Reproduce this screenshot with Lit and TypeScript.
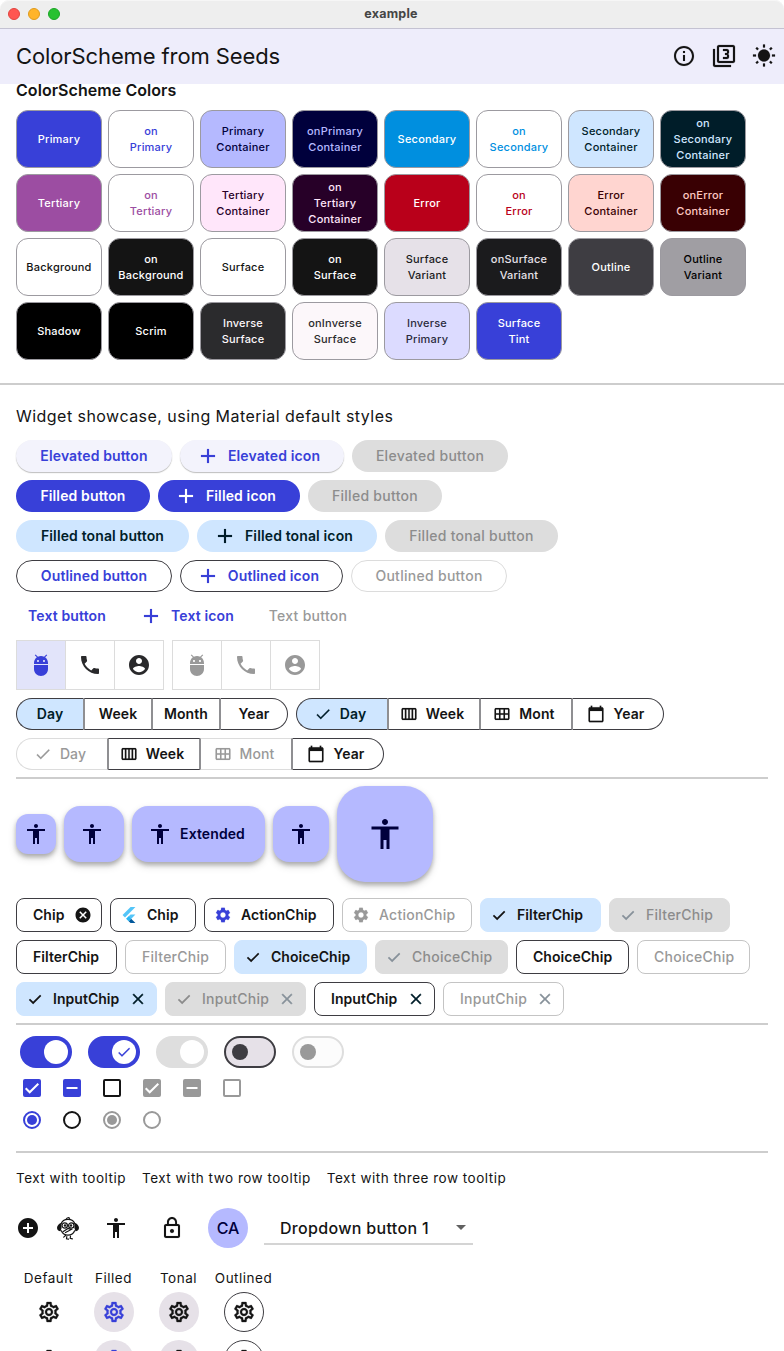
import { LitElement, html, css, svg, nothing } from "lit";
import { customElement, property } from "lit/decorators.js";
import { classMap } from "lit/directives/class-map.js";
import { styleMap } from "lit/directives/style-map.js";

const ICONS: Record<string, string> = {
  info: "M11 7h2v2h-2zm0 4h2v6h-2zm1-9C6.48 2 2 6.48 2 12s4.48 10 10 10 10-4.48 10-10S17.52 2 12 2zm0 18c-4.41 0-8-3.59-8-8s3.59-8 8-8 8 3.59 8 8-3.59 8-8 8z",
  filter3: "M21 1H7c-1.1 0-2 .9-2 2v14c0 1.1.9 2 2 2h14c1.1 0 2-.9 2-2V3c0-1.1-.9-2-2-2zm0 16H7V3h14v14zM3 5H1v16c0 1.1.9 2 2 2h16v-2H3V5zm14 8v-1.5c0-.83-.67-1.5-1.5-1.5.83 0 1.5-.67 1.5-1.5V7c0-1.11-.9-2-2-2h-4v2h4v2h-2v2h2v2h-4v2h4c1.1 0 2-.89 2-2z",
  sunny: "M6.76 4.84l-1.8-1.79-1.41 1.41 1.79 1.79 1.42-1.41zM4 10.5H1v2h3v-2zm9-9.95h-2V3.5h2V.55zm7.45 3.91l-1.41-1.41-1.79 1.79 1.41 1.41 1.79-1.79zm-3.21 13.7l1.79 1.8 1.41-1.41-1.8-1.79-1.4 1.4zM20 10.5v2h3v-2h-3zm-8-5c-3.31 0-6 2.69-6 6s2.69 6 6 6 6-2.69 6-6-2.69-6-6-6zm-1 16.95h2V19.5h-2v2.95zm-7.45-3.91l1.41 1.41 1.79-1.8-1.41-1.41-1.79 1.8z",
  add: "M19 13h-6v6h-2v-6H5v-2h6V5h2v6h6v2z",
  adb: "M5 16c0 3.87 3.13 7 7 7s7-3.13 7-7v-4H5v4zM16.12 4.37l2.1-2.1-.82-.83-2.3 2.31C14.16 3.28 13.12 3 12 3s-2.16.28-3.09.75L6.6 1.44l-.82.83 2.1 2.1C6.14 5.64 5 7.68 5 10v1h14v-1c0-2.32-1.14-4.36-2.88-5.63zM9 9c-.55 0-1-.45-1-1s.45-1 1-1 1 .45 1 1-.45 1-1 1zm6 0c-.55 0-1-.45-1-1s.45-1 1-1 1 .45 1 1-.45 1-1 1z",
  phone: "M6.62 10.79c1.44 2.83 3.76 5.14 6.59 6.59l2.2-2.2c.27-.27.67-.36 1.02-.24 1.12.37 2.33.57 3.57.57.55 0 1 .45 1 1V20c0 .55-.45 1-1 1-9.39 0-17-7.61-17-17 0-.55.45-1 1-1h3.5c.55 0 1 .45 1 1 0 1.25.2 2.45.57 3.57.11.35.03.74-.25 1.02l-2.2 2.2z",
  account: "M12 2C6.48 2 2 6.48 2 12s4.48 10 10 10 10-4.48 10-10S17.52 2 12 2zm0 3c1.66 0 3 1.34 3 3s-1.34 3-3 3-3-1.34-3-3 1.34-3 3-3zm0 14.2c-2.5 0-4.71-1.28-6-3.22.03-1.99 4-3.08 6-3.08 1.99 0 5.97 1.09 6 3.08-1.29 1.94-3.5 3.22-6 3.22z",
  check: "M9 16.17L4.83 12l-1.42 1.41L9 19 21 7l-1.41-1.41z",
  week: "M20 4H4c-1.1 0-2 .9-2 2v12c0 1.1.9 2 2 2h16c1.1 0 2-.9 2-2V6c0-1.1-.9-2-2-2zM13 6h2.5v12H13V6zm-2 12H8.5V6H11v12zM4 6h2.5v12H4V6zm16 12h-2.5V6H20v12z",
  month: "M20 4H4c-1.1 0-2 .9-2 2v12c0 1.1.9 2 2 2h16c1.1 0 2-.9 2-2V6c0-1.1-.9-2-2-2zM8 11H4V6h4v5zm6 0h-4V6h4v5zm6 0h-4V6h4v5zM8 18H4v-5h4v5zm6 0h-4v-5h4v5zm6 0h-4v-5h4v5z",
  today: "M20 3h-1V1h-2v2H7V1H5v2H4c-1.1 0-2 .9-2 2v16c0 1.1.9 2 2 2h16c1.1 0 2-.9 2-2V5c0-1.1-.9-2-2-2zm0 18H4V8h16v13z",
  accessibility: "M12 2c1.1 0 2 .9 2 2s-.9 2-2 2-2-.9-2-2 .9-2 2-2zm9 7h-6v13h-2v-6h-2v6H9V9H3V7h18v2z",
  cancel: "M12 2C6.47 2 2 6.47 2 12s4.47 10 10 10 10-4.47 10-10S17.53 2 12 2zm5 13.59L15.59 17 12 13.41 8.41 17 7 15.59 10.59 12 7 8.41 8.41 7 12 10.59 15.59 7 17 8.41 13.41 12 17 15.59z",
  clear: "M19 6.41L17.59 5 12 10.59 6.41 5 5 6.41 10.59 12 5 17.59 6.41 19 12 13.41 17.59 19 19 17.59 13.41 12z",
  settings: "M19.14 12.94c.04-.3.06-.61.06-.94 0-.32-.02-.64-.07-.94l2.03-1.58c.18-.14.23-.41.12-.61l-1.92-3.32c-.12-.22-.37-.29-.59-.22l-2.39.96c-.5-.38-1.03-.7-1.62-.94l-.36-2.54c-.04-.24-.24-.41-.48-.41h-3.84c-.24 0-.43.17-.47.41l-.36 2.54c-.59.24-1.13.57-1.62.94l-2.39-.96c-.22-.08-.47 0-.59.22L2.74 8.87c-.12.21-.08.47.12.61l2.03 1.58c-.05.3-.09.63-.09.94s.02.64.07.94l-2.03 1.58c-.18.14-.23.41-.12.61l1.92 3.32c.12.22.37.29.59.22l2.39-.96c.5.38 1.03.7 1.62.94l.36 2.54c.05.24.24.41.48.41h3.84c.24 0 .44-.17.47-.41l.36-2.54c.59-.24 1.13-.56 1.62-.94l2.39.96c.22.08.47 0 .59-.22l1.92-3.32c.12-.22.07-.47-.12-.61l-2.01-1.58zM12 15.6c-1.98 0-3.6-1.62-3.6-3.6s1.62-3.6 3.6-3.6 3.6 1.62 3.6 3.6-1.62 3.6-3.6 3.6z",
  settingsOutlined: "M19.43 12.98c.04-.32.07-.64.07-.98 0-.34-.03-.66-.07-.98l2.11-1.65c.19-.15.24-.42.12-.64l-2-3.46c-.09-.16-.26-.25-.44-.25-.06 0-.12.01-.17.03l-2.49 1c-.52-.4-1.08-.73-1.69-.98l-.38-2.65C14.46 2.18 14.25 2 14 2h-4c-.25 0-.46.18-.49.42l-.38 2.65c-.61.25-1.17.59-1.69.98l-2.49-1c-.06-.02-.12-.03-.18-.03-.17 0-.34.09-.43.25l-2 3.46c-.13.22-.07.49.12.64l2.11 1.65c-.04.32-.07.65-.07.98 0 .33.03.66.07.98l-2.11 1.65c-.19.15-.24.42-.12.64l2 3.46c.09.16.26.25.44.25.06 0 .12-.01.17-.03l2.49-1c.52.4 1.08.73 1.69.98l.38 2.65c.03.24.24.42.49.42h4c.25 0 .46-.18.49-.42l.38-2.65c.61-.25 1.17-.59 1.69-.98l2.49 1c.06.02.12.03.18.03.17 0 .34-.09.43-.25l2-3.46c.12-.22.07-.49-.12-.64l-2.11-1.65zm-1.98-1.71c.04.31.05.52.05.73 0 .21-.02.43-.05.73l-.14 1.13.89.7 1.08.84-.7 1.21-1.27-.51-1.04-.42-.9.68c-.43.32-.84.56-1.25.73l-1.06.43-.16 1.13-.2 1.35h-1.4l-.19-1.35-.16-1.13-1.06-.43c-.43-.18-.83-.41-1.23-.71l-.91-.7-1.06.43-1.27.51-.7-1.21 1.08-.84.89-.7-.14-1.13c-.03-.31-.05-.54-.05-.74s.02-.43.05-.73l.14-1.13-.89-.7-1.08-.84.7-1.21 1.27.51 1.04.42.9-.68c.43-.32.84-.56 1.25-.73l1.06-.43.16-1.13.2-1.35h1.39l.19 1.35.16 1.13 1.06.43c.43.18.83.41 1.23.71l.91.7 1.06-.43 1.27-.51.7 1.21-1.07.85-.89.7.14 1.13zM12 8c-2.21 0-4 1.79-4 4s1.79 4 4 4 4-1.79 4-4-1.79-4-4-4zm0 6c-1.1 0-2-.9-2-2s.9-2 2-2 2 .9 2 2-.9 2-2 2z",
  lock: "M12 17c1.1 0 2-.9 2-2s-.9-2-2-2-2 .9-2 2 .9 2 2 2zm6-9h-1V6c0-2.76-2.24-5-5-5S7 3.24 7 6v2H6c-1.1 0-2 .9-2 2v10c0 1.1.9 2 2 2h12c1.1 0 2-.9 2-2V10c0-1.1-.9-2-2-2zM8.9 6c0-1.71 1.39-3.1 3.1-3.1s3.1 1.39 3.1 3.1v2H8.9V6zM18 20H6V10h12v10z",
  addCircle: "M12 2C6.48 2 2 6.48 2 12s4.48 10 10 10 10-4.48 10-10S17.52 2 12 2zm5 11h-4v4h-2v-4H7v-2h4V7h2v4h4v2z",
  dropDown: "M7 10l5 5 5-5z",
};

// Extra outline, in viewBox units, for the glyphs that are drawn a touch heavier.
const EMPHASIS: Record<string, number> = {
  filter3: 0.2, info: 0.1, sunny: 0.2, add: 0.15, check: 0.2, week: 0.2, month: 0.15,
  today: 0.2, clear: 0.5, settingsOutlined: 0.3, lock: 0.1, settings: 0.2,
};

@customElement("md-icon")
class MdIcon extends LitElement {
  @property() name = "";
  @property({ type: Number }) size = 24;

  static styles = css`
    :host { display: inline-flex; flex: none; }
    svg { display: block; fill: currentColor; overflow: visible; }
  `;

  render() {
    const weight = EMPHASIS[this.name] ?? 0;
    let body = svg`<path d=${ICONS[this.name] ?? ""} stroke="currentColor" stroke-width=${weight}></path>`;
    if (this.name === "tick") {
      body = svg`<path fill="none" stroke="currentColor" stroke-width="2.3" d="M4.600 12.600L9.500 17.300L19.600 7.200"></path>`;
    } else if (this.name === "flutter") {
      body = svg`
        <path fill="#54c5f8" d="M14.3 0L2.3 12 6 15.7 21.7 0z"></path>
        <path fill="#54c5f8" d="M14.3 11.1L7.9 17.5l3.7 3.7 10.1-10.1z"></path>
        <path fill="#01579b" d="M11.6 21.2l2.7 2.8h7.4l-6.5-6.5z"></path>
        <path fill="#29b6f6" d="M7.9 17.5l3.7-3.7 3.6 3.7-3.6 3.7z"></path>`;
    } else if (this.name === "dash") {
      body = svg`
        <g fill="none" stroke="currentColor" stroke-width="1.2" stroke-linecap="round">
          <path d="M5 8C6 4.800 9 3.300 12 3.300s6 1.500 7 4.700"></path>
          <path d="M10.300 3c.8-1.400 2.500-1.700 3.300-.7"></path>
          <path d="M5.400 14.800c1 2.700 3.600 4.300 6.600 4.300s5.600-1.600 6.600-4.300"></path>
          <circle cx="8.700" cy="9.500" r="2.700"></circle>
          <circle cx="15.300" cy="9.500" r="2.700"></circle>
          <path d="M7.300 15.500L12 12.500l3.300 1-5.800 3M9.500 19.500l-1.800 1.600M10.800 20.500l-.3 2.300 2 .3M14.500 20l-.3 2.300 2.200.5"></path>
        </g>
        <circle cx="9" cy="9.500" r="1.200"></circle>
        <circle cx="15" cy="9.500" r="1.200"></circle>
        <path d="M5.200 7C3.200 7.400 1 9.700 1 11.700c0 2.200 1.600 3.700 3.600 3.600L5.600 12zM18.800 7c2 .4 4.200 2.700 4.200 4.700 0 2.200-1.600 3.700-3.600 3.600L18.400 12z"></path>`;
    }
    return html`<svg width=${this.size} height=${this.size} viewBox="0 0 24 24">${body}</svg>`;
  }
}

type Swatch = [label: string, bg: string, fg: string];
const SWATCHES: Swatch[] = [
  ["Primary", "#3840d8", "#ffffff"],
  ["on\nPrimary", "#ffffff", "#3840d8"],
  ["Primary\nContainer", "#b5b9ff", "#00003c"],
  ["onPrimary\nContainer", "#00003c", "#b5b9ff"],
  ["Secondary", "#008fdf", "#ffffff"],
  ["on\nSecondary", "#ffffff", "#008fdf"],
  ["Secondary\nContainer", "#cfe6ff", "#001d29"],
  ["on\nSecondary\nContainer", "#001d29", "#cfe6ff"],
  ["Tertiary", "#9c4da2", "#ffffff"],
  ["on\nTertiary", "#ffffff", "#9c4da2"],
  ["Tertiary\nContainer", "#ffe6fa", "#270028"],
  ["on\nTertiary\nContainer", "#270028", "#ffe6fa"],
  ["Error", "#b9001a", "#ffffff"],
  ["on\nError", "#ffffff", "#b9001a"],
  ["Error\nContainer", "#ffd5d0", "#390003"],
  ["onError\nContainer", "#390003", "#ffc8c2"],
  ["Background", "#ffffff", "#141414"],
  ["on\nBackground", "#141414", "#ffffff"],
  ["Surface", "#ffffff", "#141414"],
  ["on\nSurface", "#141414", "#ffffff"],
  ["Surface\nVariant", "#e6e1e8", "#1b1b1d"],
  ["onSurface\nVariant", "#1b1b1d", "#e6e1e8"],
  ["Outline", "#3e3d42", "#ffffff"],
  ["Outline\nVariant", "#a09ea3", "#000000"],
  ["Shadow", "#000000", "#ffffff"],
  ["Scrim", "#000000", "#ffffff"],
  ["Inverse\nSurface", "#2b2b2d", "#fcf7fa"],
  ["onInverse\nSurface", "#fcf7fa", "#2b2b2d"],
  ["Inverse\nPrimary", "#dcdbff", "#2b2b3d"],
  ["Surface\nTint", "#3840d8", "#ffffff"],
];

interface Btn { label: string; kind: string; w: number; icon?: boolean; off?: boolean }
const BUTTONS: Btn[][] = [
  [
    { label: "Elevated button", kind: "elevated", w: 156 },
    { label: "Elevated icon", kind: "elevated", w: 164, icon: true },
    { label: "Elevated button", kind: "elevated", w: 156, off: true },
  ],
  [
    { label: "Filled button", kind: "filled", w: 134 },
    { label: "Filled icon", kind: "filled", w: 142, icon: true },
    { label: "Filled button", kind: "filled", w: 134, off: true },
  ],
  [
    { label: "Filled tonal button", kind: "tonal", w: 173 },
    { label: "Filled tonal icon", kind: "tonal", w: 180, icon: true },
    { label: "Filled tonal button", kind: "tonal", w: 173, off: true },
  ],
  [
    { label: "Outlined button", kind: "outlined", w: 156 },
    { label: "Outlined icon", kind: "outlined", w: 163, icon: true },
    { label: "Outlined button", kind: "outlined", w: 156, off: true },
  ],
  [
    { label: "Text button", kind: "text", w: 102 },
    { label: "Text icon", kind: "text", w: 123, icon: true },
    { label: "Text button", kind: "text", w: 102, off: true },
  ],
];

interface Seg { label: string; icon?: string; selected?: boolean; off?: boolean }
const SEG_TEXT: Seg[] = [{ label: "Day", selected: true }, { label: "Week" }, { label: "Month" }, { label: "Year" }];
const SEG_ICON: Seg[] = [
  { label: "Day", icon: "check", selected: true },
  { label: "Week", icon: "week" },
  { label: "Mont", icon: "month" },
  { label: "Year", icon: "today" },
];
const SEG_MIXED: Seg[] = [
  { label: "Day", icon: "check", off: true },
  { label: "Week", icon: "week" },
  { label: "Mont", icon: "month", off: true },
  { label: "Year", icon: "today" },
];

interface ChipData { label: string; w: number; lead?: string; trail?: string; fill?: boolean; off?: boolean }
const CHIPS: ChipData[][] = [
  [
    { label: "Chip", w: 86, trail: "cancel" },
    { label: "Chip", w: 86, lead: "flutter" },
    { label: "ActionChip", w: 130, lead: "settings" },
    { label: "ActionChip", w: 130, lead: "settings", off: true },
    { label: "FilterChip", w: 121, lead: "tick", fill: true },
    { label: "FilterChip", w: 121, lead: "tick", fill: true, off: true },
  ],
  [
    { label: "FilterChip", w: 101 },
    { label: "FilterChip", w: 101, off: true },
    { label: "ChoiceChip", w: 133, lead: "tick", fill: true },
    { label: "ChoiceChip", w: 133, lead: "tick", fill: true, off: true },
    { label: "ChoiceChip", w: 113 },
    { label: "ChoiceChip", w: 113, off: true },
  ],
  [
    { label: "InputChip", w: 141, lead: "tick", trail: "clear", fill: true },
    { label: "InputChip", w: 141, lead: "tick", trail: "clear", fill: true, off: true },
    { label: "InputChip", w: 121, trail: "clear" },
    { label: "InputChip", w: 121, trail: "clear", off: true },
  ],
];

@customElement("app-root")
class AppRoot extends LitElement {
  static styles = css`
    :host {
      display: block;
      height: 1351px;
      overflow: hidden;
      background: #fff;
      color: #141414;
      font-family: Inter, "Liberation Sans", sans-serif;
      font-size: 14px;
      --primary: #3840d8;
      --tonal: #cfe6ff;
      --on-tonal: #001d29;
      --outline: #3e3d42;
      --disabled: #999;
      --disabled-bg: #ddd;
    }
    * { box-sizing: border-box; }
    .row { display: flex; gap: 8px; }

    .titlebar {
      display: grid;
      grid-template-columns: 100px 1fr 100px;
      align-items: center;
      height: 29px;
      padding-left: 8px;
      padding-right: 10px;
      background: #eee;
      border-bottom: 1px solid #c4c2d2;
      border-radius: 9px 9px 0 0;
      box-shadow: inset 0 1px #f6f6f6;
    }
    .lights { display: flex; gap: 8px; }
    .light { width: 12px; height: 12px; border-radius: 50%; border: 1px solid #e2443f; background: #ff5550; }
    .light.min { background: #ffb429; border-color: #e09b1c; }
    .light.max { background: #28c131; border-color: #1ba726; }
    .wintitle { text-align: center; font-weight: 700; font-size: 12.500px; color: #454545; letter-spacing: 0.250px; padding-bottom: 1px; }

    .appbar {
      display: flex;
      align-items: center;
      justify-content: space-between;
      height: 55px;
      padding: 0 8px 0 16px;
      background: #eeedfb;
    }
    .apptitle { font-size: 22px; letter-spacing: -0.110px; padding-bottom: 2px; }
    .actions { display: flex; gap: 16px; padding-bottom: 1px; }

    .content { padding: 0 16px; }
    .colors-title { height: 26px; line-height: 12px; font-size: 16px; font-weight: 600; letter-spacing: 0.060px; }
    .swatches { display: grid; grid-template-columns: repeat(8, 86px); grid-auto-rows: 58px; gap: 6px; }
    .swatch {
      display: flex; align-items: center; justify-content: center;
      border: 1px solid #9c9aa0;
      border-radius: 12px;
      font-size: 11px; line-height: 16px; font-weight: 500; letter-spacing: 0.200px;
      text-align: center; white-space: pre;
    }
    .divider { height: 2px; background: #cdcdcd; }
    .divider.full { margin-top: 23px; }
    .divider.gap { margin-top: 7px; }
    .showcase-title { height: 55px; padding-top: 21px; line-height: 20px; font-size: 16px; letter-spacing: 0.460px; }

    .stack { display: flex; flex-direction: column; gap: 8px; }
    .btn span, .seg span, .fab span, .chip span { padding-bottom: 2px; }
    .btn {
      display: flex; align-items: center; justify-content: center; gap: 8px;
      height: 32px; border-radius: 16px;
      font-weight: 600; letter-spacing: 0.130px; color: var(--primary); white-space: nowrap;
    }
    .btn.icon { padding-right: 8px; }
    .btn.text.icon { padding-right: 2px; }
    .btn.elevated { background: #f3f3fc; box-shadow: 0 1px 1px rgba(0,0,0,.22), 0 1px 2px rgba(0,0,0,.05); }
    .btn.filled { background: var(--primary); color: #fff; }
    .btn.tonal { background: var(--tonal); color: var(--on-tonal); }
    .btn.outlined { border: 1px solid var(--outline); }
    .btn.off { color: #8c8c8c; background: var(--disabled-bg); box-shadow: none; font-weight: 500; letter-spacing: 0.280px; }
    .btn.outlined.off, .btn.text.off { background: none; color: var(--disabled); border-color: #dcdcdc; }

    .toggles { display: flex; height: 50px; border: 1px solid #dcdcdc; color: #29292b; }
    .toggle { display: flex; align-items: center; justify-content: center; width: 49px; border-left: 1px solid #dcdcdc; }
    .toggle:first-child { border-left: 0; width: 48px; }
    .toggle.on { background: #e2e4fa; color: var(--primary); }
    .toggles.off { color: #999; }

    .segs { display: flex; }
    .seg {
      display: flex; align-items: center; justify-content: center; gap: 8px;
      width: 68px; height: 32px;
      border: 1px solid var(--outline);
      border-left-width: 0;
      font-weight: 600; letter-spacing: 0.100px;
    }
    .icons .seg { width: 92px; padding-right: 4px; }
    .seg + .seg { border-left: 1px solid #8f8f92; }
    .seg:not(:last-child) { border-right-color: #8f8f92; }
    .seg:first-child { border-left-width: 1px; border-radius: 16px 0 0 16px; }
    .seg:last-child { border-radius: 0 16px 16px 0; }
    .seg.selected { background: var(--tonal); color: var(--on-tonal); }
    .seg.off { color: var(--disabled); border-top-color: #dcdcdc; border-bottom-color: #dcdcdc; font-weight: 500; }
    .seg.off:first-child { border-left-color: #dcdcdc; }

    .fabs { display: flex; align-items: center; gap: 8px; height: 96px; margin-top: 7px; }
    .fab {
      display: flex; align-items: center; justify-content: center; gap: 8px;
      width: 56px; height: 56px; border-radius: 16px;
      background: #b5b9ff; color: #00003c; font-weight: 600; letter-spacing: 0.100px;
      box-shadow: 0 3px 4px rgba(0,0,0,.24), 0 4px 8px rgba(0,0,0,.14);
    }
    .fab.small { width: 40px; height: 40px; border-radius: 12px; }
    .fab.wide { width: 60px; padding-right: 4px; }
    .fab.extended { width: 133px; padding-right: 4px; }
    .fab.large { width: 96px; height: 96px; border-radius: 28px; }

    .chips { margin: 16px 0 7px; }
    .chip {
      display: flex; align-items: center;
      height: 34px; padding: 0 16px; border-radius: 8px;
      border: 1px solid var(--outline);
      font-weight: 600; letter-spacing: 0.040px; white-space: nowrap;
    }
    .chip.lead { padding-left: 9px; }
    .chip.trail { padding-right: 9px; }
    .chip .leading { margin-right: 9px; }
    .chip .leading.logo { margin: 0 10px 0 1px; }
    .chip .trailing { margin-left: auto; }
    .chip .gear { color: var(--primary); }
    .chip.fill { background: var(--tonal); border-color: var(--tonal); }
    .chip.off { color: var(--disabled); border-color: #c4c4c4; font-weight: 500; letter-spacing: 0.250px; }
    .chip.off .gear { color: #999; }
    .chip.fill.off { background: var(--disabled-bg); border-color: var(--disabled-bg); color: #8c8c8c; }
    .chip .trailing.x { color: var(--on-tonal); }
    .chip.off .trailing.x, .chip.off .leading.tick { color: #87919a; }

    .switches { display: flex; gap: 16px; padding: 11px 4px 0; }
    .switch {
      display: flex; align-items: center; justify-content: flex-end;
      width: 52px; height: 32px; padding: 4px; border-radius: 16px; background: var(--primary);
    }
    .thumb { display: flex; align-items: center; justify-content: center; width: 24px; height: 24px; border-radius: 50%; background: #fff; color: var(--primary); }
    .switch.dis { background: #dedede; }
    .switch.unsel { justify-content: flex-start; background: #e6e1e8; border: 2px solid var(--outline); padding-left: 6px; }
    .unsel .thumb { width: 16px; height: 16px; background: var(--outline); }
    .switch.unsel.dis { background: #fcfcfc; border-color: #dedede; }
    .unsel.dis .thumb { background: #999; }

    .checks { display: flex; gap: 22px; padding: 11px 7px 0; }
    .box { display: flex; align-items: center; justify-content: center; width: 18px; height: 18px; border-radius: 2px; background: var(--primary); color: #fff; }
    .box svg { display: block; fill: none; stroke: currentColor; stroke-width: 2; }
    .box.grey { background: #999; }
    .box.empty { background: none; border: 2px solid #141414; }
    .box.empty.grey { border-color: #999; }
    .radios { padding: 14px 7px 22px; }
    .radio { display: flex; align-items: center; justify-content: center; width: 18px; height: 18px; border-radius: 50%; border: 2px solid currentColor; }
    .radio.on { color: var(--primary); }
    .radio.grey { color: #999; }
    .dot { width: 10px; height: 10px; border-radius: 50%; background: currentColor; }

    .tips { display: flex; gap: 16px; padding-top: 16px; line-height: 18px; font-size: 13.500px; letter-spacing: 0.500px; white-space: nowrap; }
    .tools { display: flex; align-items: center; height: 40px; margin-top: 21px; }
    .tools .dash { margin-left: 16px; }
    .tools .access { margin-left: 24px; }
    .tools .locked { margin-left: 32px; }
    .avatar { display: flex; align-items: center; justify-content: center; width: 40px; height: 40px; margin-left: 24px; border-radius: 50%; background: #b5b9ff; color: #00003c; font-size: 16px; font-weight: 500; }
    .dropdown {
      display: flex; align-items: center; justify-content: space-between;
      width: 209px; height: 34px; margin-left: 16px; padding-left: 16px;
      border-bottom: 2px solid #d4d4d4; font-size: 16px; font-weight: 500; letter-spacing: 0.320px;
    }
    .dropdown span { padding-top: 1px; }
    .dropdown md-icon { color: #616161; }
    .variants {
      display: grid; grid-template-columns: repeat(4, 65px); grid-template-rows: 16px 40px 40px; row-gap: 8px;
      justify-items: center; margin-top: 20px; font-size: 13.500px; letter-spacing: 0.500px;
    }
    .cap { line-height: 20px; }
    .ib { display: flex; align-items: center; justify-content: center; width: 40px; height: 40px; border-radius: 50%; }
    .ib.fill { background: #e6e1e8; }
    .ib.blue { color: var(--primary); }
    .ib.line { border: 1px solid var(--outline); }
  `;

  private swatch([label, bg, fg]: Swatch) {
    return html`<div class="swatch" style=${styleMap({ background: bg, color: fg })}>${label}</div>`;
  }

  private button(b: Btn) {
    const cls = { btn: true, [b.kind]: true, icon: !!b.icon, off: !!b.off };
    return html`<div class=${classMap(cls)} style=${styleMap({ width: `${b.w}px` })}>
      ${b.icon ? html`<md-icon name="add"></md-icon>` : nothing}<span>${b.label}</span>
    </div>`;
  }

  private segmented(items: Seg[]) {
    return html`<div class=${classMap({ segs: true, icons: !!items[0].icon })}>
      ${items.map((s) => html`<div class=${classMap({ seg: true, selected: !!s.selected, off: !!s.off })}>
        ${s.icon ? html`<md-icon name=${s.icon} .size=${18}></md-icon>` : nothing}<span>${s.label}</span>
      </div>`)}
    </div>`;
  }

  private chip(c: ChipData) {
    const cls = { chip: true, lead: !!c.lead, trail: !!c.trail, fill: !!c.fill, off: !!c.off };
    const leadCls = {
      leading: true,
      gear: c.lead === "settings",
      logo: c.lead === "flutter",
      tick: c.lead === "tick" && !c.trail,
    };
    return html`<div class=${classMap(cls)} style=${styleMap({ width: `${c.w}px` })}>
      ${c.lead ? html`<md-icon class=${classMap(leadCls)} name=${c.lead} .size=${c.lead === "flutter" ? 16 : 18}></md-icon>` : nothing}
      <span>${c.label}</span>
      ${c.trail ? html`<md-icon class=${classMap({ trailing: true, x: c.trail === "clear" })} name=${c.trail} .size=${18}></md-icon>` : nothing}
    </div>`;
  }

  private toggles(off: boolean) {
    return html`<div class=${classMap({ toggles: true, off })}>
      ${["adb", "phone", "account"].map((n, i) => html`<div class=${classMap({ toggle: true, on: !off && i === 0 })}><md-icon name=${n}></md-icon></div>`)}
    </div>`;
  }

  private box(kind: "check" | "dash" | "empty", grey = false) {
    return html`<div class=${classMap({ box: true, grey, empty: kind === "empty" })}>
      ${kind === "check" ? html`<svg width="18" height="18" viewBox="0 0 18 18"><path d="M2.700 9.300L6.700 13.300L15.300 4.700"></path></svg>` : nothing}
      ${kind === "dash" ? html`<svg width="18" height="18" viewBox="0 0 18 18"><path d="M3.500 9h11"></path></svg>` : nothing}
    </div>`;
  }

  private iconRow() {
    return html`
      <div class="ib"><md-icon name="settingsOutlined"></md-icon></div>
      <div class="ib fill blue"><md-icon name="settingsOutlined"></md-icon></div>
      <div class="ib fill"><md-icon name="settingsOutlined"></md-icon></div>
      <div class="ib line"><md-icon name="settingsOutlined"></md-icon></div>`;
  }

  render() {
    const person = (size = 24) => html`<md-icon name="accessibility" .size=${size}></md-icon>`;
    return html`
      <div class="titlebar">
        <div class="lights"><div class="light"></div><div class="light min"></div><div class="light max"></div></div>
        <div class="wintitle">example</div>
      </div>
      <div class="appbar">
        <div class="apptitle">ColorScheme from Seeds</div>
        <div class="actions"><md-icon name="info"></md-icon><md-icon name="filter3"></md-icon><md-icon name="sunny"></md-icon></div>
      </div>
      <div class="content">
        <div class="colors-title">ColorScheme Colors</div>
        <div class="swatches">${SWATCHES.map((s) => this.swatch(s))}</div>
      </div>
      <div class="divider full"></div>
      <div class="content">
        <div class="showcase-title">Widget showcase, using Material default styles</div>
        <div class="stack">
          ${BUTTONS.map((r) => html`<div class="row">${r.map((b) => this.button(b))}</div>`)}
          <div class="row">${this.toggles(false)}${this.toggles(true)}</div>
          <div class="row">${this.segmented(SEG_TEXT)}${this.segmented(SEG_ICON)}</div>
          <div class="row">${this.segmented(SEG_MIXED)}</div>
        </div>
        <div class="divider gap"></div>
        <div class="fabs">
          <div class="fab small">${person()}</div>
          <div class="fab wide">${person()}</div>
          <div class="fab extended">${person()}<span>Extended</span></div>
          <div class="fab">${person()}</div>
          <div class="fab large">${person(36)}</div>
        </div>
        <div class="stack chips">${CHIPS.map((r) => html`<div class="row">${r.map((c) => this.chip(c))}</div>`)}</div>
        <div class="divider"></div>
        <div class="switches">
          <div class="switch"><div class="thumb"></div></div>
          <div class="switch"><div class="thumb"><md-icon name="check" .size=${16}></md-icon></div></div>
          <div class="switch dis"><div class="thumb"></div></div>
          <div class="switch unsel"><div class="thumb"></div></div>
          <div class="switch unsel dis"><div class="thumb"></div></div>
        </div>
        <div class="checks">
          ${this.box("check")}${this.box("dash")}${this.box("empty")}
          ${this.box("check", true)}${this.box("dash", true)}${this.box("empty", true)}
        </div>
        <div class="checks radios">
          <div class="radio on"><div class="dot"></div></div>
          <div class="radio"></div>
          <div class="radio grey"><div class="dot"></div></div>
          <div class="radio grey"></div>
        </div>
        <div class="divider"></div>
        <div class="tips"><span>Text with tooltip</span><span>Text with two row tooltip</span><span>Text with three row tooltip</span></div>
        <div class="tools">
          <md-icon name="addCircle"></md-icon>
          <md-icon class="dash" name="dash"></md-icon>
          <md-icon class="access" name="accessibility"></md-icon>
          <md-icon class="locked" name="lock"></md-icon>
          <div class="avatar">CA</div>
          <div class="dropdown"><span>Dropdown button 1</span><md-icon name="dropDown"></md-icon></div>
        </div>
        <div class="variants">
          <div class="cap">Default</div><div class="cap">Filled</div><div class="cap">Tonal</div><div class="cap">Outlined</div>
          ${this.iconRow()}${this.iconRow()}
        </div>
      </div>
    `;
  }
}
